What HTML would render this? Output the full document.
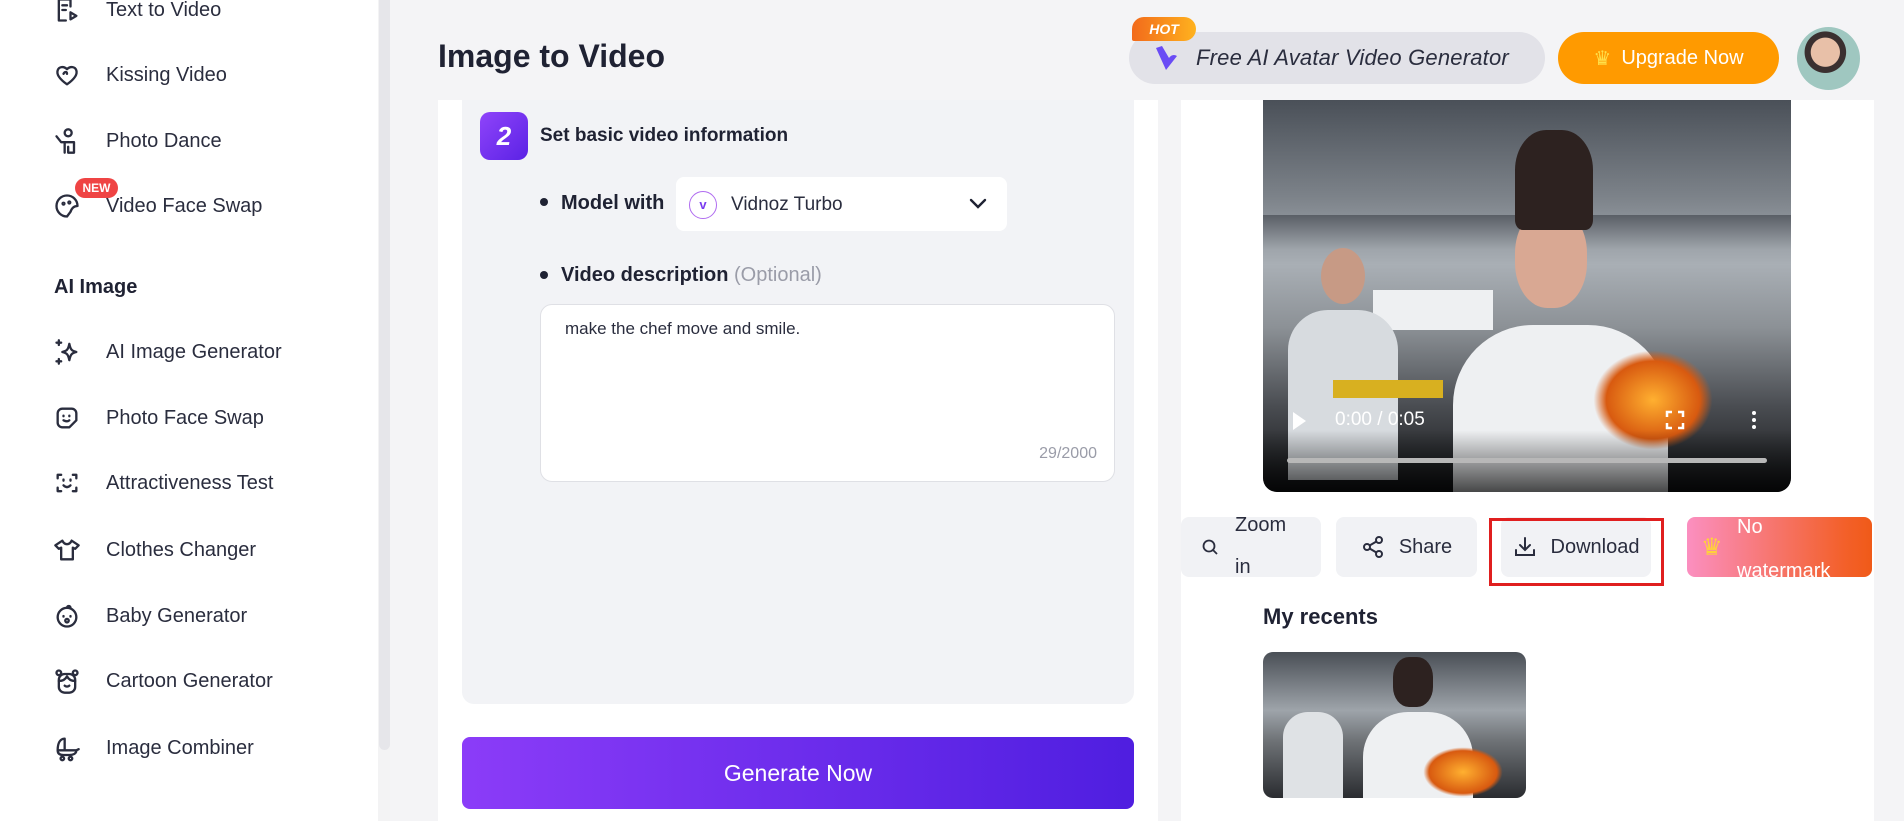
<!DOCTYPE html>
<html><head><meta charset="utf-8"><style>
*{margin:0;padding:0;box-sizing:border-box}
body{width:1904px;height:821px;overflow:hidden;background:#f4f4f6;font-family:"Liberation Sans",sans-serif;color:#1f2233;position:relative}
.abs{position:absolute}
.side{left:0;top:0;width:378px;height:821px;background:#fff}
.track{left:378px;top:0;width:12px;height:821px;background:#f3f3f4}
.thumb{left:379px;top:0;width:11px;height:750px;background:#e6e6ea;border-radius:0 0 6px 6px}
.item{left:53px;font-size:20px;color:#2a2d3e;display:flex;align-items:center;height:30px}
.item svg{width:28px;height:28px;margin-right:25px;fill:none;stroke:#2a2d3e;stroke-width:2;stroke-linecap:round;stroke-linejoin:round}
.btn{background:#f1f2f5;border-radius:8px;display:flex;align-items:center;justify-content:center;font-size:20px;color:#2a2d3e}
</style></head><body>
<div class="abs side"></div>
<div class="abs track"></div><div class="abs thumb"></div>

<div class="abs item" style="top:-5px"><svg viewBox="0 0 24 24"><path d="M5 3h10v6M5 3v18h6M8 8h4M8 12h3M15 14l5 3-5 3z"/></svg>Text to Video</div>
<div class="abs item" style="top:60px"><svg viewBox="0 0 24 24"><path d="M12 20C5 15 3 11 4 8c1-3 5-4 8-1 3-3 7-2 8 1 1 3-1 7-8 12zM9 11c1-2 3-2 3 0"/></svg>Kissing Video</div>
<div class="abs item" style="top:126px"><svg viewBox="0 0 24 24"><circle cx="13" cy="5" r="3"/><path d="M3 8l4 5h3v9M10 13h8v9h-5v-5"/></svg>Photo Dance</div>
<div class="abs item" style="top:191px"><svg viewBox="0 0 24 24"><path d="M12 21a9 9 0 1 1 9-9c-3 0-5 2-6 5l-3 4z"/><circle cx="9" cy="10" r=".8"/><circle cx="14" cy="9" r=".8"/></svg>Video Face Swap</div>
<div class="abs" style="left:75px;top:178px;width:43px;height:20px;background:#ef4444;border-radius:10px;color:#fff;font-size:12px;font-weight:bold;text-align:center;line-height:20px">NEW</div>
<div class="abs" style="left:54px;top:276px;font-size:20px;font-weight:bold;color:#1f2233">AI Image</div>
<div class="abs item" style="top:337px"><svg viewBox="0 0 24 24"><path d="M14 5c1 5 2 6 6 7-4 1-5 2-6 7-1-5-2-6-6-7 4-1 5-2 6-7zM5 2v4M3 4h4M5 18v4M3 20h4"/></svg>AI Image Generator</div>
<div class="abs item" style="top:403px"><svg viewBox="0 0 24 24"><path d="M4 8a4 4 0 0 1 4-4h8a4 4 0 0 1 4 4v6l-6 6H8a4 4 0 0 1-4-4zM9 10v.5M14 10v.5M9 14c2 1 4 1 5 0"/></svg>Photo Face Swap</div>
<div class="abs item" style="top:468px"><svg viewBox="0 0 24 24"><path d="M4 8V5h3M17 5h3v3M20 16v3h-3M7 19H4v-3M9 9v1M15 9v1M9 14c2 2 4 2 6 0"/></svg>Attractiveness Test</div>
<div class="abs item" style="top:535px"><svg viewBox="0 0 24 24"><path d="M8 4l-6 4 3 3 2-1v10h10V10l2 1 3-3-6-4c-1 2-2 3-4 3S9 6 8 4z"/></svg>Clothes Changer</div>
<div class="abs item" style="top:601px"><svg viewBox="0 0 24 24"><circle cx="12" cy="13" r="8"/><path d="M12 5c0-2 3-2 3 0M9 12v.5M15 12v.5"/><circle cx="12" cy="16" r="1.5"/></svg>Baby Generator</div>
<div class="abs item" style="top:666px"><svg viewBox="0 0 24 24"><rect x="5" y="6" width="14" height="16" rx="5"/><circle cx="5" cy="5" r="2"/><circle cx="19" cy="5" r="2"/><path d="M5 12c4 0 6-2 7-4 1 2 3 4 7 4M10 16c1 1 3 1 4 0"/></svg>Cartoon Generator</div>
<div class="abs item" style="top:733px"><svg viewBox="0 0 24 24"><path d="M4 14h16M4 14c0 3 2 4 5 4h5c3 0 6-1 6-4M10 14V4c-4 0-6 4-6 10M20 14l2-1"/><circle cx="8" cy="21" r="1.5"/><circle cx="15" cy="21" r="1.5"/></svg>Image Combiner</div>

<div class="abs" style="left:438px;top:38px;font-size:32px;font-weight:bold;color:#1f2233">Image to Video</div>

<!-- header right -->
<div class="abs" style="left:1129px;top:32px;width:416px;height:52px;background:#e2e2e8;border-radius:26px"></div>
<div class="abs" style="left:1132px;top:17px;width:64px;height:24px;background:linear-gradient(90deg,#f26a1b,#ffb21e);border-radius:12px 12px 12px 2px;color:#fff;font-size:14px;font-style:italic;font-weight:bold;text-align:center;line-height:24px">HOT</div>
<svg class="abs" style="left:1153px;top:44px" width="28" height="30" viewBox="0 0 28 30"><path d="M3 4l10 22 11-14c-3-2-6-1-8 2L9 2z" fill="#6a4cf5"/></svg>
<div class="abs" style="left:1196px;top:45px;font-size:22px;font-style:italic;color:#2a2d3e;letter-spacing:0.2px">Free AI Avatar Video Generator</div>
<div class="abs" style="left:1558px;top:32px;width:221px;height:52px;background:#ff9a00;border-radius:26px;color:#fff;font-size:20px;display:flex;align-items:center;justify-content:center"><span style="color:#ffe04a;margin-right:10px;font-size:20px">♛</span>Upgrade Now</div>
<div class="abs" style="left:1797px;top:27px;width:63px;height:63px;border-radius:50%;background:radial-gradient(circle at 45% 40%,#e8c0a8 0 28%,#3a3030 29% 40%,#9fc7c0 41%)"></div>

<!-- left card -->
<div class="abs" style="left:438px;top:100px;width:720px;height:721px;background:#fff"></div>
<div class="abs" style="left:462px;top:100px;width:672px;height:604px;background:#f2f3f6;border-radius:0 0 12px 12px"></div>
<div class="abs" style="left:480px;top:112px;width:48px;height:48px;border-radius:10px;background:linear-gradient(135deg,#8f44fa,#5b22e5);color:#fff;font-size:26px;font-weight:bold;font-style:italic;text-align:center;line-height:48px">2</div>
<div class="abs" style="left:540px;top:125px;font-size:19px;font-weight:bold">Set basic video information</div>
<div class="abs" style="left:540px;top:198px;width:8px;height:8px;border-radius:50%;background:#1f2233"></div>
<div class="abs" style="left:561px;top:192px;font-size:20px;font-weight:bold">Model with</div>
<div class="abs" style="left:676px;top:177px;width:331px;height:54px;background:#fff;border-radius:8px"></div>
<div class="abs" style="left:689px;top:191px;width:28px;height:28px;border-radius:50%;border:1.5px solid #b06cf0;color:#7a3cf0;font-size:13px;text-align:center;line-height:25px;font-weight:bold">v</div>
<div class="abs" style="left:731px;top:194px;font-size:19px;color:#2a2d3e">Vidnoz Turbo</div>
<svg class="abs" style="left:968px;top:197px" width="20" height="14" viewBox="0 0 20 14"><path d="M3 3l7 7 7-7" fill="none" stroke="#1f2233" stroke-width="2.4" stroke-linecap="round"/></svg>
<div class="abs" style="left:540px;top:271px;width:8px;height:8px;border-radius:50%;background:#1f2233"></div>
<div class="abs" style="left:561px;top:264px;font-size:20px;font-weight:bold">Video description <span style="font-weight:normal;color:#9a9ca8">(Optional)</span></div>
<div class="abs" style="left:540px;top:304px;width:575px;height:178px;background:#fff;border:1px solid #dfe0e5;border-radius:12px"></div>
<div class="abs" style="left:565px;top:319px;font-size:17px;color:#2a2d3e">make the chef move and smile.</div>
<div class="abs" style="left:1020px;top:445px;width:77px;text-align:right;font-size:16px;color:#9a9ca8">29/2000</div>
<div class="abs" style="left:462px;top:737px;width:672px;height:72px;border-radius:8px;background:linear-gradient(90deg,#8b3cf8,#4f1ee0);color:#fff;font-size:23px;display:flex;align-items:center;justify-content:center">Generate Now</div>

<!-- right card -->
<div class="abs" style="left:1181px;top:100px;width:693px;height:721px;background:#fff"></div>
<div class="abs" style="left:1263px;top:100px;width:528px;height:392px;border-radius:0 0 14px 14px;overflow:hidden;background:linear-gradient(180deg,#4a5058 0%,#7d838a 25%,#a9afb5 42%,#8c9196 58%,#4a4d52 78%,#111214 100%)">
 <div class="abs" style="left:0;top:115px;width:528px;height:35px;background:linear-gradient(180deg,#5a5f66,#a0a6ac)"></div>
 <div class="abs" style="left:110px;top:190px;width:120px;height:40px;background:#eef0f2"></div>
 <div class="abs" style="left:25px;top:210px;width:110px;height:170px;background:#d7dbdf;border-radius:40px 40px 0 0"></div>
 <div class="abs" style="left:58px;top:148px;width:44px;height:56px;background:#c79a85;border-radius:50%"></div>
 <div class="abs" style="left:190px;top:225px;width:215px;height:167px;background:#eef0f2;border-radius:80px 80px 0 0"></div>
 <div class="abs" style="left:252px;top:108px;width:72px;height:100px;background:#d9a893;border-radius:45%"></div>
 <div class="abs" style="left:252px;top:30px;width:78px;height:100px;background:#2d2220;border-radius:40% 40% 10% 10%"></div>
 <div class="abs" style="left:330px;top:250px;width:120px;height:100px;background:radial-gradient(#ffb030,#d85a10 55%,transparent 70%)"></div>
 <div class="abs" style="left:70px;top:280px;width:110px;height:18px;background:#d8b020"></div>
 <div class="abs" style="left:0;top:330px;width:528px;height:62px;background:linear-gradient(180deg,rgba(0,0,0,0),rgba(0,0,0,.7))"></div>
</div>
<svg class="abs" style="left:1291px;top:411px" width="16" height="20" viewBox="0 0 16 20"><path d="M2 1l13 9-13 9z" fill="#fff"/></svg>
<div class="abs" style="left:1335px;top:409px;font-size:19px;color:#fff">0:00 / 0:05</div>
<svg class="abs" style="left:1665px;top:410px" width="20" height="20" viewBox="0 0 20 20"><path d="M2 7V2h5M13 2h5v5M18 13v5h-5M7 18H2v-5" fill="none" stroke="#fff" stroke-width="2.5"/></svg>
<div class="abs" style="left:1752px;top:411px;width:4px;height:4px;background:#fff;border-radius:2px;box-shadow:0 7px #fff,0 14px #fff"></div>
<div class="abs" style="left:1287px;top:458px;width:480px;height:5px;background:#b8b8b8;border-radius:3px"></div>

<div class="abs btn" style="left:1181px;top:517px;width:140px;height:60px;justify-content:flex-start;padding-left:20px"><svg width="18" height="18" viewBox="0 0 18 18" style="margin-right:16px"><circle cx="8" cy="8" r="5.5" fill="none" stroke="#2a2d3e" stroke-width="1.8"/><path d="M12 12l4 4" stroke="#2a2d3e" stroke-width="1.8"/></svg><span style="line-height:42px;width:50px;font-size:20px;margin-top:-2px">Zoom in</span></div>
<div class="abs btn" style="left:1336px;top:517px;width:141px;height:60px"><svg width="24" height="24" viewBox="0 0 24 24" style="margin-right:14px" fill="none" stroke="#2a2d3e" stroke-width="2"><circle cx="18" cy="5" r="3"/><circle cx="6" cy="12" r="3"/><circle cx="18" cy="19" r="3"/><path d="M8.6 13.5l6.8 4M15.4 6.5l-6.8 4"/></svg>Share</div>
<div class="abs btn" style="left:1501px;top:517px;width:150px;height:60px"><svg width="24" height="24" viewBox="0 0 24 24" style="margin-right:14px" fill="none" stroke="#2a2d3e" stroke-width="2" stroke-linecap="round"><path d="M12 3v12M7 10l5 5 5-5M3 15v5h18v-5"/></svg>Download</div>
<div class="abs" style="left:1489px;top:518px;width:175px;height:68px;border:3.5px solid #e01f1f"></div>
<div class="abs" style="left:1687px;top:517px;width:185px;height:60px;border-radius:8px;background:linear-gradient(90deg,#fb8fc0,#f3602a 85%,#f05a18);overflow:hidden">
 <span class="abs" style="left:14px;top:16px;color:#ffd23a;font-size:24px">♛</span>
 <span class="abs" style="left:50px;top:-12px;color:#fff;font-size:20px;line-height:44px;width:110px">No watermark</span>
</div>
<div class="abs" style="left:1263px;top:604px;font-size:22px;font-weight:bold">My recents</div>
<div class="abs" style="left:1263px;top:652px;width:263px;height:146px;border-radius:10px;overflow:hidden;background:linear-gradient(180deg,#4a4f56 0%,#9ea4aa 40%,#707478 60%,#2a2c30 100%)">
 <div class="abs" style="left:20px;top:60px;width:60px;height:86px;background:#dfe2e5;border-radius:25px 25px 0 0"></div>
 <div class="abs" style="left:100px;top:60px;width:110px;height:86px;background:#eef0f2;border-radius:45px 45px 0 0"></div>
 <div class="abs" style="left:130px;top:5px;width:40px;height:50px;background:#2d2220;border-radius:40%"></div>
 <div class="abs" style="left:160px;top:95px;width:80px;height:50px;background:radial-gradient(#ffb030,#d85a10 60%,transparent 70%)"></div>
</div>
</body></html>
